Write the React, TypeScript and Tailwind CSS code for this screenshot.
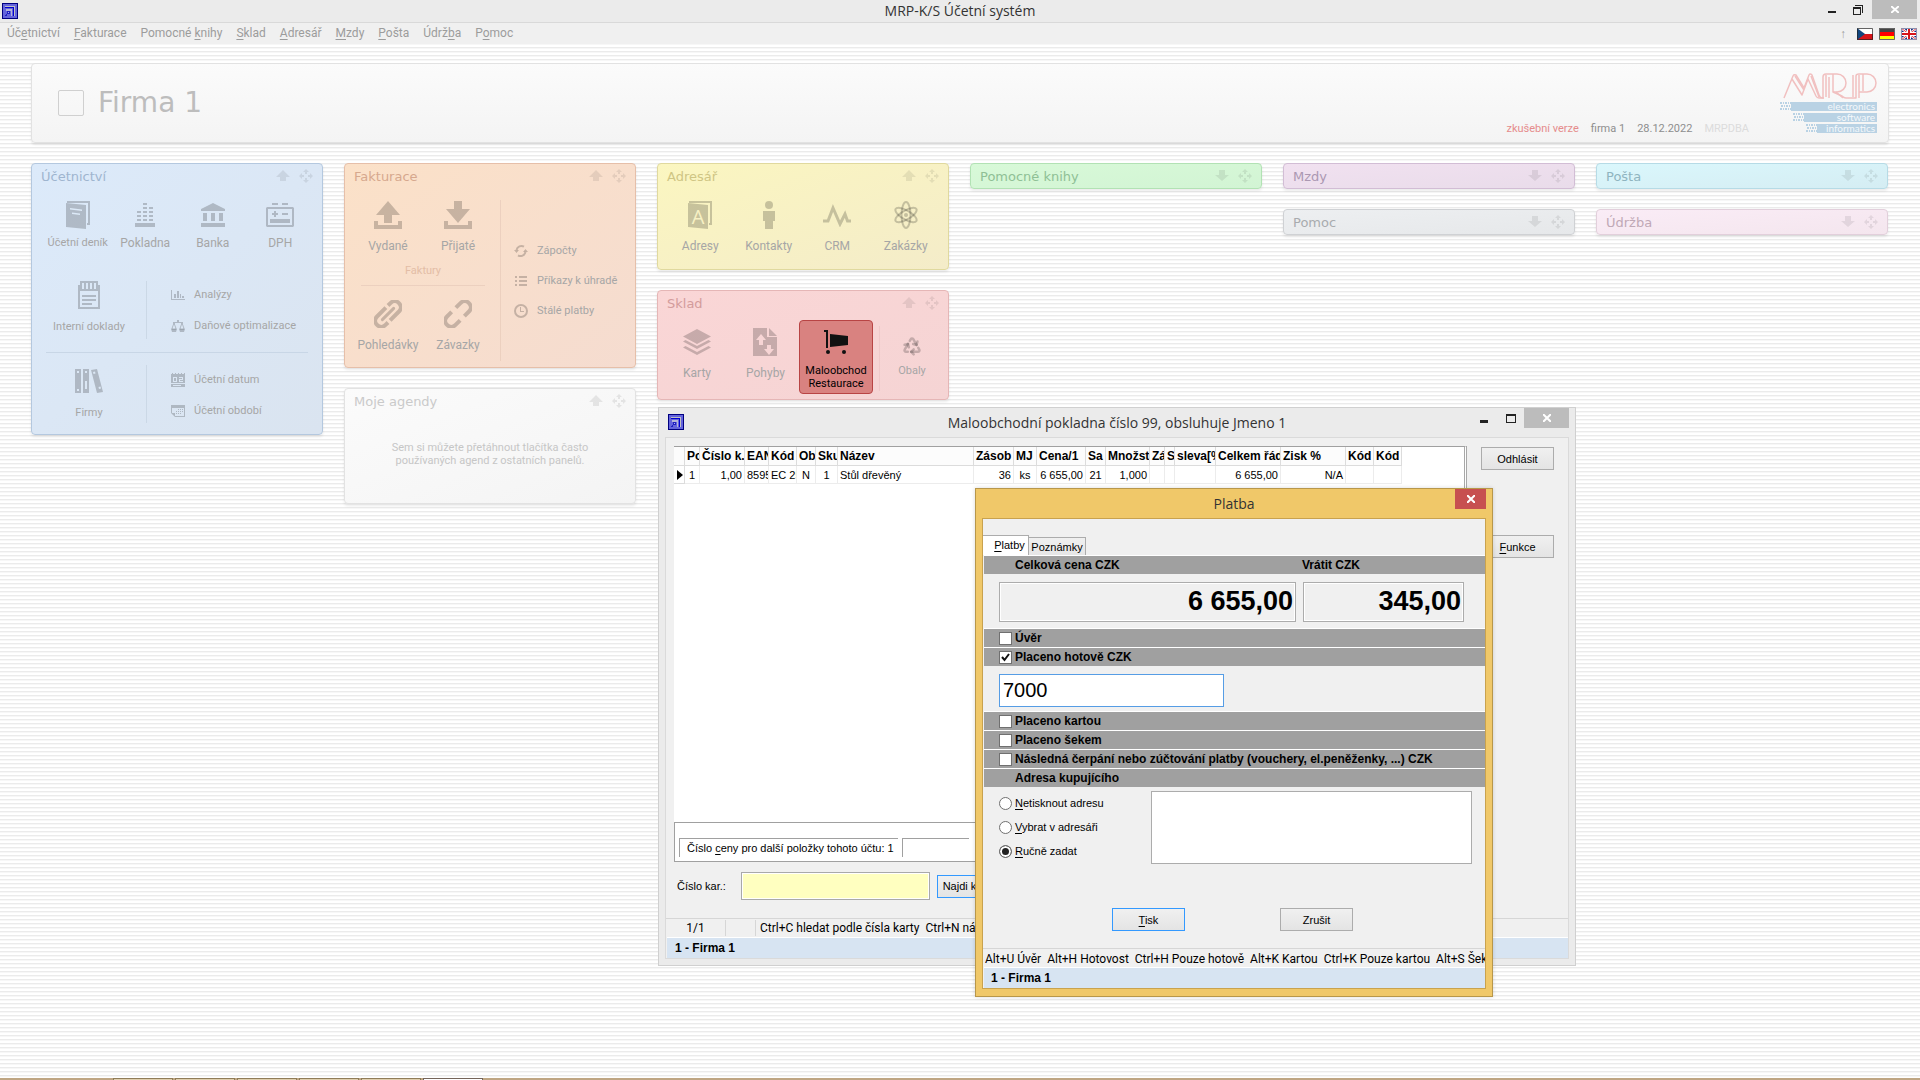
import { useState, type ReactNode } from "react";
import { Recycle } from "lucide-react";
import clsx from "clsx";

// "&" marks the accelerator letter of a caption
function Caption({ text }: { text: string }) {
  const at = text.indexOf("&");
  if (at < 0) return <>{text}</>;
  return (
    <>
      {text.slice(0, at)}
      <u className="underline-offset-2">{text[at + 1]}</u>
      {text.slice(at + 2)}
    </>
  );
}

/* ---------- icons ---------- */

interface SvgProps {
  w: number;
  h: number;
  children: ReactNode;
}

function Svg({ w, h, children }: SvgProps) {
  return (
    <svg width={w} height={h} viewBox={`0 0 ${w} ${h}`} fill="currentColor" className="shrink-0" aria-hidden="true">
      {children}
    </svg>
  );
}

const AppIcon = () => (
  <svg width="16" height="16" viewBox="0 0 16 16" shapeRendering="crispEdges" aria-hidden="true">
    <rect width="16" height="16" fill="#000080" />
    <rect x="1" y="1" width="14" height="14" fill="#6464dc" />
    <path d="M3 3h10v10h-1V5H3z" fill="#c0c0c0" />
    <path d="M3 4h9v9h-1V5H3z" fill="#0000d0" />
    <path d="M4 6h6v7H9V8H4z" fill="#b4b4d8" />
    <path d="M5 8h3v3H5z" fill="#2020c0" />
    <path d="M6 9h1v1H6z" fill="#b0b0f0" />
    <path d="M3 12h2v1H3zM4 11h1v1H4z" fill="#2020c0" />
  </svg>
);

const BookIcon = ({ letter }: { letter?: boolean }) => (
  <Svg w={24} h={28}>
    <path d="M1 0h23v24h-3v-2h1V2H1z" />
    <path d="M0 2l20 2v24L0 26z" />
    {letter ? (
      <text x="10" y="23" textAnchor="middle" className="fill-[#f7f1c4] font-['Open_Sans',sans-serif] text-[20px]">
        A
      </text>
    ) : (
      <path d="M4 7l12 1.500v1.500L4 8.500zM6 11.500l8 1V14l-8-1z" className="fill-[#dce9f7]" />
    )}
  </Svg>
);

const TillIcon = () => (
  <Svg w={20} h={24}>
    <path d="M8 0h4v2H8zM8 4h4v2H8zM14 4h4v2h-4zM2 8h4v2H2zM8 8h4v2H8zM14 8h4v2h-4zM2 12h4v2H2zM8 12h4v2H8zM14 12h4v2h-4zM2 16h4v2H2zM8 16h4v2H8zM14 16h4v2h-4zM0 20h20v4H0z" />
  </Svg>
);

const BankIcon = () => (
  <Svg w={24} h={24}>
    <path d="M12 0l12 6v2H0V6zM2 10h4v8H2zM10 10h4v8h-4zM18 10h4v8h-4zM0 20h24v4H0z" />
  </Svg>
);

const VatIcon = () => (
  <Svg w={28} h={24}>
    <path d="M6 0h6v2H6zM16 0h6v2h-6zM8 8h2v2h2v2h-2v2H8v-2H6v-2h2zM16 10h6v2h-6zM4 16h20v4H4z" />
    <path fillRule="evenodd" d="M1 4h26l1 1v18l-1 1H1l-1-1V5zM2 6v16h24V6z" />
  </Svg>
);

const NotesIcon = () => (
  <Svg w={22} h={28}>
    <path fillRule="evenodd" d="M2 0h18v4h2v24H0V4h2zM4 2v6h2V2zM8 2v6h2V2zM12 2v6h2V2zM16 2v6h2V2zM2 10v16h18V10z" />
    <path d="M4 14h14v2H4zM4 18h14v2H4zM4 22h10v2H4z" />
  </Svg>
);

const BindersIcon = () => (
  <Svg w={28} h={24}>
    <path fillRule="evenodd" d="M0 0h6v24H0zM2 2v2h2V2zM2 20v2h2v-2zM8 0h6v24H8zM10 2v2h2V2zM10 12v8h2v-8z" />
    <path fillRule="evenodd" d="M16 1l6-1 6 23-6 1zM18 3l.5 2 2-.5-.5-2zM23.500 18l.5 2 2-.5-.5-2z" />
  </Svg>
);

const ChartIcon = () => (
  <Svg w={14} h={10}>
    <path d="M0 0h1v9h13v1H0zM3 4h2v4H3zM6 1h2v7H6zM9 4h1v4H9zM11 6h2v2h-2z" />
  </Svg>
);

const ScalesIcon = () => (
  <Svg w={14} h={12}>
    <path d="M6 0h2v2h4v1H2V2h4z" />
    <path d="M3 3L.8 9h4.400zM11 3L8.800 9h4.400z" fill="none" stroke="currentColor" />
    <path d="M0 9h6l-1 3H1zM8 9h6l-1 3H9z" />
  </Svg>
);

const DateIcon = () => (
  <Svg w={14} h={14}>
    <path fillRule="evenodd" d="M0 1h1V0h1v1h2V0h1v1h2V0h1v1h2V0h1v1h2V0h1v14H0zM2 4v5h4V4zM8 4v1h3v1H8v3h4V8H9V7h3V4zM3 5h2v3H3zM0 10v1h14v-1zM2 12h8v1H2z" />
  </Svg>
);

const PeriodIcon = () => (
  <Svg w={14} h={12}>
    <path fillRule="evenodd" d="M0 0h14v12H4L0 8zM1 3v5h3v3h9V3z" />
    <path d="M7 4h1v1H7zM9 4h1v1H9zM11 4h1v1h-1zM5 6h1v1H5zM7 6h1v1H7zM9 6h1v1H9zM11 6h1v1h-1zM5 8h1v1H5zM7 8h1v1H7zM9 8h1v1H9z" />
  </Svg>
);

const IssuedIcon = () => (
  <Svg w={28} h={28}>
    <path d="M14 0l12 14h-8v8h-8v-8H2zM0 20h4v4h20v-4h4v8H0z" />
  </Svg>
);

const ReceivedIcon = () => (
  <Svg w={28} h={28}>
    <path d="M10 0h8v8h8L14 22 2 8h8zM0 20h4v4h20v-4h4v8H0z" />
  </Svg>
);

const LinkIcon = ({ broken }: { broken?: boolean }) => (
  <Svg w={28} h={28}>
    <g transform="rotate(-45 14 14)" fill="none" stroke="currentColor" strokeWidth="4">
      {broken ? (
        <path d="M11 8H4.500a6 6 0 0 0 0 12H11M17 8h6.500a6 6 0 0 1 0 12H17" />
      ) : (
        <>
          <path d="M17 8H4.500a6 6 0 0 0 0 12H8M11 20h12.500a6 6 0 0 0 0-12H20" />
          <path d="M6 14h16" strokeWidth="3" strokeLinecap="round" />
        </>
      )}
    </g>
  </Svg>
);

const OffsetIcon = () => (
  <Svg w={14} h={14}>
    <path d="M2.500 6a5 5 0 0 1 7.500-3.300M11.500 8A5 5 0 0 1 4 11.300" fill="none" stroke="currentColor" strokeWidth="2" />
    <path d="M0 6h5L2.500 9zM9 8h5l-2.500-3z" />
  </Svg>
);

const ListIcon = () => (
  <Svg w={12} h={12}>
    <path d="M0 1h2v2H0zM4 1h8v2H4zM0 5h2v2H0zM4 5h8v2H4zM0 9h2v2H0zM4 9h8v2H4z" />
  </Svg>
);

const ClockIcon = () => (
  <Svg w={14} h={14}>
    <circle cx="7" cy="7" r="6" fill="none" stroke="currentColor" strokeWidth="2" />
    <path d="M6 3h1v4h3v1H6z" />
  </Svg>
);

const PersonIcon = () => (
  <Svg w={12} h={28}>
    <circle cx="6" cy="4" r="4" />
    <path d="M0 10h12v10h-2v8H2v-8H0z" />
  </Svg>
);

const PulseIcon = () => (
  <Svg w={28} h={24}>
    <path d="M0 18h5L10 5l7 16 5-10 2.500 7H28" fill="none" stroke="currentColor" strokeWidth="3" />
  </Svg>
);

const AtomIcon = () => (
  <Svg w={24} h={28}>
    <g fill="none" stroke="currentColor" strokeWidth="2">
      <ellipse cx="12" cy="14" rx="4.500" ry="13" />
      <ellipse cx="12" cy="14" rx="4.500" ry="12" transform="rotate(60 12 14)" />
      <ellipse cx="12" cy="14" rx="4.500" ry="12" transform="rotate(-60 12 14)" />
    </g>
    <circle cx="12" cy="14" r="2" />
  </Svg>
);

const LayersIcon = () => (
  <Svg w={28} h={26}>
    <path d="M14 0l14 7.500L14 15 0 7.500zM2.500 11L14 17l11.500-6 2.500 1.500L14 20 0 12.500zM2.500 17L14 23l11.500-6 2.500 1.500L14 26 0 18.500z" />
  </Svg>
);

const MovesIcon = () => (
  <Svg w={24} h={28}>
    <path d="M0 0h14v9h10v19H0zM16 0l8 8h-8z" />
    <path d="M8 6l5 6h-3v5H6v-5H3zM14 17h4v4h3l-5 6-5-6h3z" className="fill-[#f7d5d5]" />
  </Svg>
);

const CartIcon = () => (
  <Svg w={24} h={24}>
    <path d="M0 0h4v18H2V2H0zM6 4l18 2v9L6 17z" />
    <circle cx="4" cy="22" r="2" />
    <circle cx="20" cy="22" r="2" />
  </Svg>
);

const PanelArrow = ({ down }: { down?: boolean }) => (
  <Svg w={14} h={12}>
    {down ? <path d="M4 0h6v5h4l-7 6-7-6h4z" /> : <path d="M7 0l7 7h-4v4H4V7H0z" />}
  </Svg>
);

const MoveIcon = () => (
  <Svg w={14} h={14}>
    <path d="M7 0l3 3H8v2H6V3H4zM7 14l3-3H8V9H6v2H4zM0 7l3-3v2h2v2H3v2zM14 7l-3-3v2H9v2h2v2z" />
  </Svg>
);

const CzechFlag = () => (
  <svg width="16" height="12" viewBox="0 0 16 12" aria-hidden="true">
    <path d="M0 0h16v6H0z" fill="#fff" />
    <path d="M0 6h16v6H0z" fill="#d7141a" />
    <path d="M0 0l8 6-8 6z" fill="#11457e" />
    <path d="M.5.5h15v11H.5z" fill="none" stroke="#222" strokeOpacity=".7" />
  </svg>
);

const GermanFlag = () => (
  <svg width="16" height="12" viewBox="0 0 16 12" aria-hidden="true">
    <path d="M0 0h16v4H0z" fill="#444" />
    <path d="M0 4h16v4H0z" fill="#f00" />
    <path d="M0 8h16v4H0z" fill="#ff0" />
    <path d="M.5.5h15v11H.5z" fill="none" stroke="#666" />
  </svg>
);

const BritishFlag = () => (
  <svg width="16" height="12" viewBox="0 0 16 12" aria-hidden="true">
    <path d="M0 0h16v12H0z" fill="#1b2a80" />
    <path d="M0 0l16 12M16 0L0 12" stroke="#fff" strokeWidth="2.500" />
    <path d="M0 0l16 12M16 0L0 12" stroke="#d7141a" strokeWidth=".8" />
    <path d="M8 0v12M0 6h16" stroke="#fff" strokeWidth="4" />
    <path d="M8 0v12M0 6h16" stroke="#d7141a" strokeWidth="2" />
    <path d="M.5.5h15v11H.5z" fill="none" stroke="#8890b0" />
  </svg>
);

const logoBars = [
  { x: 0, y: 29, label: "electronics" },
  { x: 13, y: 40, label: "software" },
  { x: 26, y: 51, label: "informatics" },
];

const MrpLogo = () => (
  <svg width="97" height="61" viewBox="0 0 97 61" role="img" aria-label="MRP">
    <g fill="none" stroke="#f1c0c0" strokeWidth="1.500" strokeLinejoin="round">
      <path d="M4 25L13 3q1-2 3-1l8 13 5-13q1-2 3 0l7 20q1 3 4 3V4q0-3 3-3h11a9 9 0 0 1 0 18h-4" />
      <path d="M12 6l10 16 6-16 8 17q1 2 3 2h5M15 3l9 14M31 3l8 21" />
      <path d="M49 25V4M46 2v22M53 1v18l9 4q2 2 4 2h10V3q0-2 3-2h8a9 9 0 0 1 0 18h-8" />
      <path d="M56 19l7 6M73 24V2M79 25V2M83 1v17" />
    </g>
    {logoBars.map((bar) => (
      <g key={bar.label}>
        <rect x={bar.x + 11} y={bar.y} width={86 - bar.x} height="9" fill="#b9d2e4" />
        <path
          d={`M${bar.x} ${bar.y + 1}h11M${bar.x + 1} ${bar.y + 4}h10M${bar.x} ${bar.y + 7}h11`}
          stroke="#b9d2e4"
          strokeWidth="2"
          strokeDasharray="2 1 1 1"
        />
        <text x="95" y={bar.y + 8} textAnchor="end" fill="#f4f8fb" className="font-['Lato',sans-serif] text-[10px]">
          {bar.label}
        </text>
      </g>
    ))}
  </svg>
);

/* ---------- dashboard ---------- */

interface PanelProps {
  title: string;
  tone: string;
  titleTone: string;
  collapsed?: boolean;
  children?: ReactNode;
}

function Panel({ title, tone, titleTone, collapsed, children }: PanelProps) {
  return (
    <section className={clsx("rounded border bg-linear-to-br shadow-[0_2px_3px_rgba(0,0,0,0.08)]", tone)}>
      <header className="flex h-6 items-center pr-[9px] pl-[9px]">
        <h2 className={clsx("flex-1 pt-[2px] font-['DejaVu_Sans',sans-serif] text-[13px] leading-4", titleTone)}>{title}</h2>
        <button aria-label={collapsed ? "Rozbalit" : "Sbalit"} className="mr-[9px] text-black/8">
          <PanelArrow down={collapsed} />
        </button>
        <button aria-label="Přesunout" className="text-black/8">
          <MoveIcon />
        </button>
      </header>
      {children}
    </section>
  );
}

interface ItemProps {
  icon: ReactNode;
  label: string;
}

interface TileProps extends ItemProps {
  gap?: string;
  small?: boolean;
}

function Tile({ icon, label, gap = "gap-[9px]", small }: TileProps) {
  return (
    <button className={clsx("flex flex-col items-center", gap)}>
      <span className="flex h-7 items-center text-black/20">{icon}</span>
      <span className={clsx("leading-4 whitespace-nowrap text-[#a6a6a6]", small ? "text-[11px]" : "text-[12px]")}>{label}</span>
    </button>
  );
}

function LineItem({ icon, label }: ItemProps) {
  return (
    <button className="flex items-center gap-[9px]">
      <span className="flex w-[14px] justify-center text-black/20">{icon}</span>
      <span className="text-[11px] leading-4 whitespace-nowrap text-[#a6a6a6]">{label}</span>
    </button>
  );
}

function Dashboard() {
  return (
    <div className="grid grid-cols-6 items-start gap-x-[21px] pr-[1px]">
      <Panel title="Účetnictví" tone="border-[#b4c8df] from-[#dceafa] to-[#dae4f0]" titleTone="text-[#9fb5cf]">
        <div className="grid grid-cols-4 pt-[13px] pr-2 pl-3">
          <Tile icon={<BookIcon />} label="Účetní deník" gap="gap-[6px]" small />
          <Tile icon={<TillIcon />} label="Pokladna" gap="gap-[6px]" />
          <Tile icon={<BankIcon />} label="Banka" gap="gap-[6px]" />
          <Tile icon={<VatIcon />} label="DPH" gap="gap-[6px]" />
        </div>
        <div className="mt-[30px] flex h-[58px]">
          <div className="flex w-[114px] items-start justify-center">
            <Tile icon={<NotesIcon />} label="Interní doklady" gap="gap-[10px]" small />
          </div>
          <div className="flex flex-1 flex-col items-start justify-center gap-[15px] border-l border-[#cbd8e6] pl-6">
            <LineItem icon={<ChartIcon />} label="Analýzy" />
            <LineItem icon={<ScalesIcon />} label="Daňové optimalizace" />
          </div>
        </div>
        <hr className="mx-[14px] mt-[13px] border-[#c8d6e6]" />
        <div className="mt-3 mb-[11px] flex h-[58px]">
          <div className="flex w-[114px] items-center justify-center">
            <Tile icon={<BindersIcon />} label="Firmy" gap="gap-[10px]" small />
          </div>
          <div className="flex flex-1 flex-col items-start justify-end gap-[15px] border-l border-[#cbd8e6] pb-1 pl-6">
            <LineItem icon={<DateIcon />} label="Účetní datum" />
            <LineItem icon={<PeriodIcon />} label="Účetní období" />
          </div>
        </div>
      </Panel>

      <div className="flex flex-col gap-5">
        <Panel title="Fakturace" tone="border-[#e6bfa9] from-[#fbe1c8] to-[#f5dcd0]" titleTone="text-[#d6a88e]">
          <div className="flex pt-3 pb-[6px]">
            <div className="w-[155px] pt-[1px] pr-[7px] pb-2 pl-2">
              <div className="grid grid-cols-2">
                <Tile icon={<IssuedIcon />} label="Vydané" />
                <Tile icon={<ReceivedIcon />} label="Přijaté" />
              </div>
              <p className="mt-[9px] text-center text-[11px] leading-4 text-[#e3bda6]">Faktury</p>
              <hr className="mx-2 mt-[6px] mb-[14px] border-[#ecd0bf]" />
              <div className="grid grid-cols-2">
                <Tile icon={<LinkIcon />} label="Pohledávky" />
                <Tile icon={<LinkIcon broken />} label="Závazky" />
              </div>
            </div>
            <div className="flex flex-1 flex-col items-start justify-center gap-[14px] border-l border-[#ecd0bf] pl-[13px]">
              <LineItem icon={<OffsetIcon />} label="Zápočty" />
              <LineItem icon={<ListIcon />} label="Příkazy k úhradě" />
              <LineItem icon={<ClockIcon />} label="Stálé platby" />
            </div>
          </div>
        </Panel>
        <Panel title="Moje agendy" tone="border-[#e2e2e2] from-[#fbfbfb] to-[#f4f4f4]" titleTone="text-[#cacaca]">
          <p className="px-10 pt-[28px] pb-9 text-center text-[11px] leading-[13px] text-[#c6c6c6]">
            Sem si můžete přetáhnout tlačítka často používaných agend z ostatních panelů.
          </p>
        </Panel>
      </div>

      <div className="flex flex-col gap-5">
        <Panel title="Adresář" tone="border-[#e0d99e] from-[#fbf6c0] to-[#f4ecc9]" titleTone="text-[#cfc584]">
          <div className="grid grid-cols-4 px-2 pt-[13px] pb-[15px]">
            <Tile icon={<BookIcon letter />} label="Adresy" />
            <Tile icon={<PersonIcon />} label="Kontakty" />
            <Tile icon={<PulseIcon />} label="CRM" />
            <Tile icon={<AtomIcon />} label="Zakázky" />
          </div>
        </Panel>
        <Panel title="Sklad" tone="border-[#e5b6b6] from-[#fad6d6] to-[#f5d4d4]" titleTone="text-[#d39c9c]">
          <div className="flex items-stretch px-1 pt-[5px] pb-[5px]">
            <div className="flex w-[70px] justify-center pt-2">
              <Tile icon={<LayersIcon />} label="Karty" />
            </div>
            <div className="flex w-[67px] justify-center pt-2">
              <Tile icon={<MovesIcon />} label="Pohyby" />
            </div>
            <button className="flex h-[74px] w-[74px] flex-col items-center gap-[10px] rounded border border-[#b84444] bg-[#d98280] pt-[9px] text-[11px] leading-[13px] text-black">
              <span className="text-[#111]">
                <CartIcon />
              </span>
              <span>
                Maloobchod
                <br />
                Restaurace
              </span>
            </button>
            <div className="mt-[6px] mb-[3px] ml-[6px] flex flex-1 justify-center border-l border-[#efc9c9]">
              <button className="flex flex-col items-center pt-[10px]">
                <Recycle size={20} strokeWidth={3} className="text-black/20" />
                <span className="mt-[7px] text-[11px] leading-4 text-[#a6a6a6]">Obaly</span>
              </button>
            </div>
          </div>
        </Panel>
      </div>

      <Panel collapsed title="Pomocné knihy" tone="border-[#b2e2b4] from-[#d8f9d8] to-[#d2f4d4]" titleTone="text-[#8fc095]" />

      <div className="flex flex-col gap-5">
        <Panel collapsed title="Mzdy" tone="border-[#d2bdd5] from-[#f1e1f0] to-[#e9dcea]" titleTone="text-[#ab98b2]" />
        <Panel collapsed title="Pomoc" tone="border-[#cfd1d4] from-[#edeff1] to-[#e6e8ea]" titleTone="text-[#a8abae]" />
      </div>

      <div className="flex flex-col gap-5">
        <Panel collapsed title="Pošta" tone="border-[#b6dbe6] from-[#daf7fc] to-[#d5edf3]" titleTone="text-[#8fb4bf]" />
        <Panel collapsed title="Údržba" tone="border-[#e2cfdb] from-[#faecf6] to-[#f4e6ee]" titleTone="text-[#c0a8b6]" />
      </div>
    </div>
  );
}

/* ---------- classic form controls ---------- */

interface PushButtonProps {
  text: string;
  primary?: boolean;
}

function PushButton({ text, primary }: PushButtonProps) {
  return (
    <button
      className={clsx(
        "h-[23px] w-[73px] shrink-0 overflow-hidden border bg-linear-to-b from-[#f0f0f0] to-[#e4e4e4] text-[11px] leading-4 whitespace-nowrap",
        primary ? "border-[#3399ff]" : "border-[#acacac]"
      )}
    >
      <Caption text={text} />
    </button>
  );
}

/* ---------- cash register window ---------- */

interface Column {
  head: string;
  width: number;
  value: string;
  align?: string;
}

const columns: Column[] = [
  { head: "Po", width: 15, value: "1", align: "text-center" },
  { head: "Číslo k.", width: 45, value: "1,00", align: "text-right" },
  { head: "EAN", width: 24, value: "8595" },
  { head: "Kód", width: 28, value: "EC 25" },
  { head: "Ob", width: 19, value: "N", align: "text-center" },
  { head: "Sku", width: 22, value: "1", align: "text-center" },
  { head: "Název", width: 136, value: "Stůl dřevěný" },
  { head: "Zásob", width: 40, value: "36", align: "text-right" },
  { head: "MJ", width: 23, value: "ks", align: "text-center" },
  { head: "Cena/1", width: 49, value: "6 655,00", align: "text-right" },
  { head: "Sa", width: 20, value: "21", align: "text-center" },
  { head: "Množst", width: 44, value: "1,000", align: "text-right" },
  { head: "Zá", width: 15, value: "" },
  { head: "S", width: 10, value: "" },
  { head: "sleva[%", width: 41, value: "" },
  { head: "Celkem řád", width: 65, value: "6 655,00", align: "text-right" },
  { head: "Zisk %", width: 65, value: "N/A", align: "text-right" },
  { head: "Kód", width: 28, value: "" },
  { head: "Kód", width: 28, value: "" },
];

function ItemsTable() {
  return (
    <table className="w-[728px] table-fixed border-separate border-spacing-0 text-[11px] leading-[14px] whitespace-nowrap">
      <colgroup>
        <col style={{ width: 11 }} />
        {columns.map((column, i) => (
          <col key={i} style={{ width: column.width }} />
        ))}
      </colgroup>
      <thead>
        <tr className="h-[19px]">
          <th className="border-r border-b border-[#dcdcdc] bg-[#fcfcfc]" aria-label="Řádek" />
          {columns.map((column, i) => (
            <th key={i} className="overflow-hidden border-r border-b border-[#dcdcdc] bg-[#fcfcfc] p-0 pl-[2px] text-left text-[12px] font-bold">
              {column.head}
            </th>
          ))}
        </tr>
      </thead>
      <tbody>
        <tr className="h-[18px]">
          <td className="border-r border-b border-[#dcdcdc] p-0 pl-[3px]">
            <Svg w={6} h={10}>
              <path d="M0 0l6 5-6 5z" />
            </Svg>
          </td>
          {columns.map((column, i) => (
            <td key={i} className={clsx("overflow-hidden border-r border-b border-[#ececec] p-0 px-[2px]", column.align)}>
              {column.value}
            </td>
          ))}
        </tr>
      </tbody>
    </table>
  );
}

function RegisterWindow() {
  return (
    <section className="absolute top-[407px] left-[658px] flex h-[559px] w-[918px] flex-col border border-[#d0d0d0] bg-[#ebebeb] px-[6px] pb-[6px] font-['Liberation_Sans',Arial,sans-serif] text-[11px] leading-4 text-black">
      <header className="grid h-[29px] shrink-0 grid-cols-[120px_1fr_120px]">
        <span className="pt-[6px] pl-[3px]">
          <AppIcon />
        </span>
        <h2 className="pt-[5px] text-center font-['Open_Sans',sans-serif] text-[14px] leading-5 whitespace-nowrap text-[#333]">
          Maloobchodní pokladna číslo 99, obsluhuje Jmeno 1
        </h2>
        <div className="flex justify-end">
          <button aria-label="Minimalizovat" className="mr-[18px] h-5 w-2 pt-[6px] text-[#222]">
            <Svg w={8} h={3}>
              <path d="M0 0h8v3H0z" />
            </Svg>
          </button>
          <button aria-label="Maximalizovat" className="mr-2 h-5 text-[#222]">
            <Svg w={10} h={9}>
              <path fillRule="evenodd" d="M0 0h10v9H0zM1 2v6h8V2z" />
            </Svg>
          </button>
          <button aria-label="Zavřít" className="flex h-5 w-[45px] items-center justify-center bg-[#bcbcbc] text-white">
            <Svg w={8} h={8}>
              <path d="M0 0l8 8M8 0L0 8" stroke="currentColor" strokeWidth="2" />
            </Svg>
          </button>
        </div>
      </header>

      <div className="flex min-h-0 flex-1 flex-col border border-[#dadada] bg-[#f0f0f0]">
        <div className="flex gap-[14px] pt-2 pr-[14px] pl-2">
          <div className="min-w-0 flex-1">
            <div className="h-[376px] border-t border-r-3 border-[#a0a0a0] border-r-[#a8a8a8] bg-white [border-right-style:double]">
              <ItemsTable />
            </div>
            <div className="flex h-10 gap-1 border border-[#a0a0a0] bg-white pt-[15px] pb-1 pl-1">
              <p className="w-[219px] border-t border-l border-[#a0a0a0] pt-[1px] pl-[7px] whitespace-nowrap">
                <Caption text="Číslo &ceny pro další položky tohoto účtu: 1" />
              </p>
              <p className="w-[67px] border-t border-l border-[#a0a0a0]" />
            </div>
          </div>
          <div className="flex flex-col gap-[65px] pt-[1px]">
            <PushButton text="Odhlásit" />
            <PushButton text="&Funkce" />
          </div>
        </div>

        <div className="mt-[10px] flex items-center gap-[7px] pl-[11px]">
          <label className="flex items-center">
            <span className="w-16">Číslo kar.:</span>
            <input type="text" className="h-7 w-[189px] border border-[#a9a9a9] bg-[#ffffc0] px-1 inset-ring-1 inset-ring-white outline-none" />
          </label>
          <PushButton text="Najdi kartu..." primary />
        </div>

        <div className="mt-auto flex h-[19px] items-center border-t border-[#d6d6d6] font-['Roboto',sans-serif] text-[12px] whitespace-nowrap">
          <span className="w-[60px] border-r border-[#d6d6d6] text-center">1/1</span>
          <span className="h-4 w-[30px] border-r border-[#d6d6d6]" />
          <span className="pl-1 whitespace-pre">Ctrl+C hledat podle čísla karty  Ctrl+N název</span>
        </div>
        <p className="ml-[1px] h-[21px] border-t border-white bg-[#d7e4f2] pt-[2px] pl-2 text-[12px] font-bold">1 - Firma 1</p>
      </div>
    </section>
  );
}

/* ---------- payment dialog ---------- */

function Bar({ children }: { children: ReactNode }) {
  return (
    <div className="ml-[1px] flex h-[19px] items-center border-t border-white bg-[#a0a0a0] pl-[15px] text-[12px] font-bold whitespace-nowrap">
      {children}
    </div>
  );
}

interface PaymentCheckProps {
  label: string;
  defaultChecked?: boolean;
}

function PaymentCheck({ label, defaultChecked }: PaymentCheckProps) {
  return (
    <Bar>
      <label className="flex items-center gap-[3px]">
        <span className="relative flex">
          <input
            type="checkbox"
            defaultChecked={defaultChecked}
            className="peer h-[13px] w-[13px] appearance-none border border-[#707070] bg-white"
          />
          <svg width="13" height="13" viewBox="0 0 13 13" className="pointer-events-none absolute inset-0 hidden peer-checked:block" aria-hidden="true">
            <path d="M3 6l2.500 3L10 3" fill="none" stroke="#111" strokeWidth="2" />
          </svg>
        </span>
        {label}
      </label>
    </Bar>
  );
}

const addressModes = ["&Netisknout adresu", "&Vybrat v adresáři", "&Ručně zadat"];

function PaymentDialog() {
  const [cash, setCash] = useState("7000");
  const [addressMode, setAddressMode] = useState(2);

  return (
    <section
      role="dialog"
      aria-label="Platba"
      className="absolute top-[488px] left-[975px] flex h-[509px] w-[518px] flex-col border border-[#b8974a] bg-[#f0c869] px-[6px] pb-[7px] font-['Liberation_Sans',Arial,sans-serif] text-[11px] leading-4 text-black shadow-[0_0_4px_rgba(0,0,0,0.15)]"
    >
      <header className="grid h-[29px] shrink-0 grid-cols-[31px_1fr_31px]">
        <span />
        <h2 className="pt-[5px] text-center font-['Open_Sans',sans-serif] text-[14px] leading-5 text-[#333]">Platba</h2>
        <button aria-label="Zavřít" className="flex h-5 items-center justify-center bg-[#c75050] text-white">
          <Svg w={8} h={8}>
            <path d="M0 0l8 8M8 0L0 8" stroke="currentColor" strokeWidth="2" />
          </Svg>
        </button>
      </header>

      <div className="flex min-h-0 flex-1 flex-col overflow-hidden border border-[#c9a24e] bg-[#f0f0f0]">
        <div role="tablist" className="flex h-9 shrink-0 items-end">
          <button role="tab" aria-selected="true" className="h-5 w-[46px] border-t border-r border-[#acacac] bg-white pb-[2px] pl-2">
            <Caption text="&Platby" />
          </button>
          <button role="tab" aria-selected="false" className="h-[18px] w-[57px] border-t border-r border-[#acacac] bg-linear-to-b from-[#f0f0f0] to-[#e6e6e6]">
            Poznámky
          </button>
        </div>

        <Bar>
          <span className="w-[287px] pl-4">Celková cena CZK</span>
          <span className="pl-4">Vrátit CZK</span>
        </Bar>
        <div className="flex gap-[7px] px-4 pt-2 pb-[6px] text-right text-[27px] leading-9 font-bold">
          <output className="h-10 w-[297px] border border-[#acacac] pr-[2px] inset-ring-1 inset-ring-white">6 655,00</output>
          <output className="h-10 w-[161px] border border-[#acacac] pr-[2px] inset-ring-1 inset-ring-white">345,00</output>
        </div>

        <PaymentCheck label="Úvěr" />
        <PaymentCheck label="Placeno hotově CZK" defaultChecked />
        <div className="px-4 pt-2 pb-1">
          <input
            type="text"
            aria-label="Placeno hotově CZK"
            value={cash}
            onChange={(e) => setCash(e.target.value)}
            className="block h-[33px] w-[225px] border border-[#569de5] bg-white px-[3px] text-[20px] outline-none"
          />
        </div>
        <PaymentCheck label="Placeno kartou" />
        <PaymentCheck label="Placeno šekem" />
        <PaymentCheck label="Následná čerpání nebo zúčtování platby (vouchery, el.peněženky, ...) CZK" />
        <Bar>
          <span className="pl-4">Adresa kupujícího</span>
        </Bar>

        <div className="flex pt-1 pl-4">
          <fieldset className="w-[152px]">
            {addressModes.map((mode, i) => (
              <label key={mode} className="flex h-6 items-center gap-[3px]">
                <input
                  type="radio"
                  name="address"
                  checked={addressMode === i}
                  onChange={() => setAddressMode(i)}
                  className="h-[13px] w-[13px] appearance-none rounded-full border border-[#707070] bg-white checked:bg-[#222] checked:inset-ring-2 checked:inset-ring-white"
                />
                <span>
                  <Caption text={mode} />
                </span>
              </label>
            ))}
          </fieldset>
          <textarea aria-label="Adresa kupujícího" className="h-[73px] w-[321px] resize-none border border-[#acacac] bg-white p-1 outline-none" />
        </div>

        <div className="mt-11 flex gap-[95px] pl-[129px]">
          <PushButton text="&Tisk" primary />
          <PushButton text="Zrušit" />
        </div>

        <p className="mt-auto h-[19px] overflow-hidden border-t border-[#d6d6d6] pt-[2px] pl-[2px] font-['Roboto',sans-serif] text-[12px] whitespace-pre">
          Alt+U Úvěr  Alt+H Hotovost  Ctrl+H Pouze hotově  Alt+K Kartou  Ctrl+K Pouze kartou  Alt+S Šekem
        </p>
        <p className="ml-[1px] h-[21px] border-t border-white bg-[#d7e4f2] pt-[2px] pl-[7px] text-[12px] font-bold">1 - Firma 1</p>
      </div>
    </section>
  );
}

/* ---------- application ---------- */

const menu = ["Úč&etnictví", "&Fakturace", "Pomocné &knihy", "&Sklad", "&Adresář", "&Mzdy", "&Pošta", "Údrž&ba", "P&omoc"];

export default function App() {
  return (
    <div className="relative flex min-h-screen flex-col bg-[repeating-linear-gradient(to_bottom,#f7f7f7_0_1px,#fff_1px_3px,#ebebeb_3px_4px)] font-['Roboto',sans-serif]">
      <header className="grid h-[23px] grid-cols-[150px_1fr_150px] border-b border-[#d9d9d9] bg-[#ebebeb]">
        <span className="pt-[3px] pl-[2px]">
          <AppIcon />
        </span>
        <h1 className="text-center font-['Open_Sans',sans-serif] text-[14px] leading-[22px] text-[#333]">MRP-K/S Účetní systém</h1>
        <div className="flex justify-end pr-[3px] text-[#222]">
          <button aria-label="Minimalizovat" className="mr-[17px] h-[19px] pt-1">
            <Svg w={8} h={2}>
              <path d="M0 0h8v2H0z" />
            </Svg>
          </button>
          <button aria-label="Obnovit" className="mr-[9px] h-[19px]">
            <Svg w={10} h={10}>
              <path fillRule="evenodd" d="M0 2h8v8H0zM1 4v5h6V4zM2 0h8v8H9V1H2z" />
            </Svg>
          </button>
          <button aria-label="Zavřít" className="flex h-[19px] w-[45px] items-center justify-center bg-[#bcbcbc] text-white">
            <Svg w={8} h={7}>
              <path d="M0 0l8 7M8 0L0 7" stroke="currentColor" strokeWidth="2" />
            </Svg>
          </button>
        </div>
      </header>

      <nav className="flex h-[21px] items-center bg-[#f0f0f0] pr-[3px] pl-[7px] text-[12px] leading-4 text-[#9c9c9c]">
        <div className="flex flex-1 gap-[14px] pb-[2px]">
          {menu.map((item) => (
            <button key={item}>
              <Caption text={item} />
            </button>
          ))}
        </div>
        <span className="mr-[11px]">↑</span>
        <div className="flex gap-[6px]">
          <button aria-label="Čeština">
            <CzechFlag />
          </button>
          <button aria-label="Deutsch">
            <GermanFlag />
          </button>
          <button aria-label="English">
            <BritishFlag />
          </button>
        </div>
      </nav>

      <main className="flex flex-1 flex-col gap-5 px-[31px] pt-[19px]">
        <section className="flex h-20 items-center rounded border border-[#e2e2e2] bg-linear-to-b from-[#fbfbfb] to-[#f4f4f4] pr-[11px] pl-[26px] shadow-[0_2px_2px_rgba(0,0,0,0.08)]">
          <input type="checkbox" aria-label="Firma 1" className="h-[26px] w-[26px] appearance-none rounded-xs border border-[#d0d0d0]" />
          <h2 className="ml-[14px] flex-1 font-['DejaVu_Sans',sans-serif] text-[28px] leading-8 text-[#bdbdbd]">Firma 1</h2>
          <p className="mr-[31px] flex gap-3 pt-[51px] text-[11px] leading-4 text-[#8e8e8e]">
            <span className="text-[#e58c8c]">zkušební verze</span>
            <span>firma 1</span>
            <span>28.12.2022</span>
            <span className="text-[#dcdcdc]">MRPDBA</span>
          </p>
          <MrpLogo />
        </section>
        <Dashboard />
      </main>

      <RegisterWindow />
      <PaymentDialog />

      <footer className="flex h-[2px] gap-[2px] bg-[#bfa683] pl-[113px]">
        {[0, 1, 2, 3, 4].map((i) => (
          <span key={i} className="w-[60px] border border-b-0 border-[#8f7c58] bg-[#e0cfae]" />
        ))}
        <span className="w-[60px] border border-b-0 border-[#75655a] bg-white" />
      </footer>
    </div>
  );
}
